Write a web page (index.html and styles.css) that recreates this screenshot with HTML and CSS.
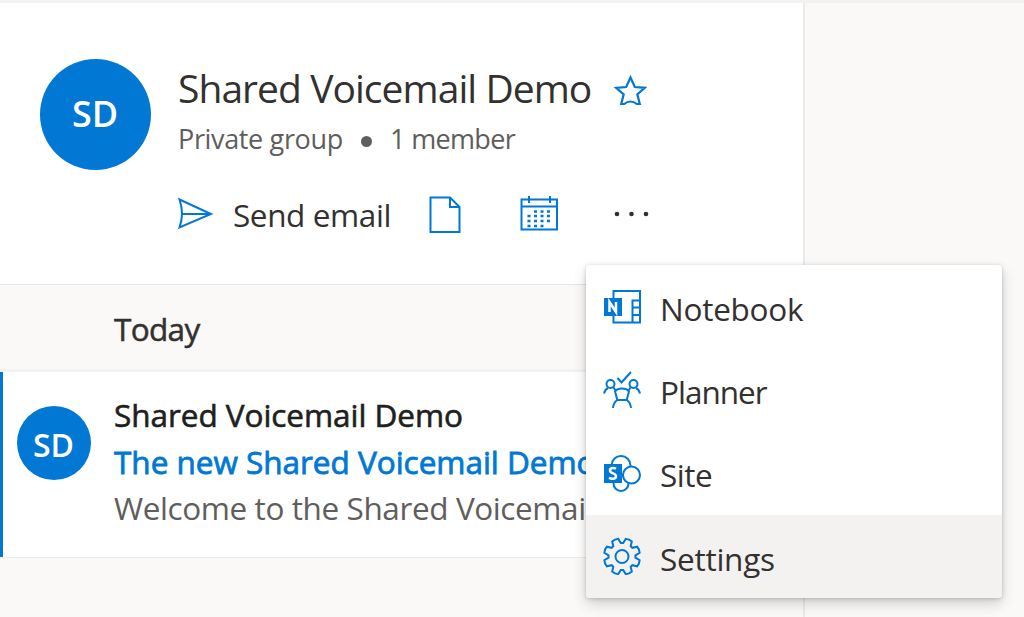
FILE: index.html
```html
<!DOCTYPE html>
<html lang="en">
<head>
<meta charset="utf-8">
<title>Shared Voicemail Demo</title>
<link rel="stylesheet" href="styles.css">
</head>
<body>
<div class="app">
  <main class="panel">
    <header class="group">
      <div class="avatar avatar-large"><span>SD</span></div>
      <div class="group-info">
        <div class="title-row">
          <h1 class="title">Shared Voicemail Demo</h1>
          <svg class="star" width="34" height="34" viewBox="0 0 34 34"><path d="M17.500 3.500l4.300 9.500 10 .8-7.500 6.500 2.500 9.700h-3q-3-2.500-6.300-2.500T11.200 30h-3l2.500-9.700L3.200 13.800l10-.8z"/></svg>
        </div>
        <div class="meta"><span class="privacy">Private group</span><span class="dot"></span><span class="members">1 member</span></div>
        <div class="toolbar">
          <svg class="send" width="38" height="34" viewBox="0 0 38 34"><path d="M2.500 2.500L34 17 2.500 30.500Q7.500 17 2.500 2.500zM5 17h29"/></svg>
          <span class="send-label">Send email</span>
          <svg class="file" width="32" height="38" viewBox="0 0 32 38"><path d="M1.500 1.500H21L30.500 11v25H1.500zM21 1.500V11h9.500"/></svg>
          <svg class="calendar" width="38" height="36" viewBox="0 0 38 36"><path d="M1.500 3.500h35.500v30H1.500zM1.500 10.500H37M9 0v7M30 0v7"/><path class="days" d="M14 15.500h18M7.500 20h25M7.500 25h25M7.500 30h18"/></svg>
          <svg class="more" width="36" height="6" viewBox="0 0 36 6"><circle cx="3" cy="3" r="2.300"/><circle cx="17.500" cy="3" r="2.300"/><circle cx="32" cy="3" r="2.300"/></svg>
        </div>
      </div>
    </header>
    <div class="day"><span>Today</span></div>
    <article class="message">
      <div class="avatar avatar-small"><span>SD</span></div>
      <div class="lines">
        <div class="sender">Shared Voicemail Demo</div>
        <div class="subject">The new Shared Voicemail Demo</div>
        <div class="preview">Welcome to the Shared Voicemail</div>
      </div>
    </article>
  </main>
  <nav class="menu">
    <div class="item">
      <svg width="38" height="38" viewBox="0 0 38 38"><path d="M10.500 10V3H37v31.500H10.500V28M29.500 34V12.500H37M29.500 19.500H37M29.500 27H37"/><path class="solid" d="M1 10h18v18H1z"/><path class="mark" d="M6.500 24V14l6.500 10V14"/></svg>
      <span class="w-notebook">Notebook</span>
    </div>
    <div class="item">
      <svg width="38" height="38" viewBox="0 0 38 38"><path d="M14.500 7l4 4.500L28 1M1 22.500c.8-2.800 2-4.500 4-5.500M10.500 16.500l2 3M37 22.500c-.8-2.800-2-4.500-4-5.500M27.500 16.500l-2 3M19 17.500c3 0 5.500 1 7 2.800l-2.300 8.700h-9.400L12 20.300c1.500-1.800 4-2.800 7-2.800zM14.300 29Q10.500 31.500 10 37M23.700 29q3.800 2.500 4.300 8"/><circle cx="7.500" cy="13" r="4"/><circle cx="30.500" cy="13" r="4"/></svg>
      <span class="w-planner">Planner</span>
    </div>
    <div class="item">
      <svg width="38" height="38" viewBox="0 0 38 38"><circle cx="18" cy="11.500" r="9.500"/><circle class="paper" cx="18" cy="29.500" r="7.500"/><circle class="paper" cx="28.500" cy="21" r="8.500"/><path class="solid" d="M1 10h18v19H1z"/><path class="mark" d="M13 14.700c-2-1.200-6-1-6 1.800 0 3.500 6 2.300 6 5.700 0 3-4.500 3-7 1.500"/></svg>
      <span class="w-site">Site</span>
    </div>
    <div class="item selected">
      <svg width="38" height="38" viewBox="0 0 38 38"><path id="gear" d=""/><circle cx="19" cy="19.500" r="6.500"/></svg>
      <span class="w-settings">Settings</span>
    </div>
  </nav>
</div>
<script src="gear.js"></script>
</body>
</html>
```
FILE: gear.js
```js
// Builds the outline of the eight-toothed gear around (19, 19.5).
const steps = [];
for (let i = 0; i < 8; i++) {
  const base = i * 45;
  const point = (radius, degrees) => {
    const a = (base + degrees) * Math.PI / 180;
    return (19 + radius * Math.sin(a)).toFixed(2) + ' ' + (19.5 - radius * Math.cos(a)).toFixed(2);
  };
  steps.push((i ? 'L' : 'M') + point(13.5, -5), 'L' + point(13.5, 5), 'L' + point(18, 12), 'L' + point(18.300, 22.500), 'L' + point(18, 33));
}
document.getElementById('gear').setAttribute('d', steps.join('') + 'Z');
```
FILE: styles.css
```css
* { box-sizing: border-box; }
body { margin: 0; overflow: hidden; font-family: "Open Sans", "Noto Sans", sans-serif; background: #faf9f8; color: #323130; }
.app { position: relative; width: 1024px; height: 617px; border-top: 3px solid #f3f2f1; background: #faf9f8; overflow: hidden; }
.panel { width: 805px; height: 614px; border-right: 2px solid #eaeaea; }
svg { flex: none; display: block; fill: none; stroke: #0078d4; stroke-width: 2; }
span, h1, .lines div { white-space: nowrap; }
.group { display: flex; gap: 27px; height: 282px; padding: 56px 0 0 40px; background: #fff; border-bottom: 1px solid #e5e5e5; }
.avatar { display: flex; flex: none; align-items: center; justify-content: center; border-radius: 50%; background: #0078d4; color: #fff; font-weight: 600; }
.avatar-large { width: 111px; height: 111px; font-size: 36px; line-height: 40px; }
.avatar-large span { padding: 0 1px 2px 0; }
.avatar-small { width: 74px; height: 74px; margin-top: 34px; font-size: 32px; line-height: 40px; }
.avatar-small span { padding: 3px 1px 0 0; }
.group-info { padding-top: 2px; }
.title-row { display: flex; align-items: center; gap: 22px; }
.title { width: 413px; margin: 0; font-size: 39px; font-weight: 400; line-height: 54px; letter-spacing: -0.950px; }
.star { margin-top: 5px; stroke-width: 2.200; }
.meta { display: flex; align-items: center; height: 36px; margin-top: 6px; font-size: 27px; line-height: 36px; color: #605e5c; }
.privacy { width: 165px; letter-spacing: -0.350px; }
.dot { width: 11px; height: 11px; margin: 5px 18px 0 18px; border-radius: 50%; background: #605e5c; }
.members { letter-spacing: -0.650px; }
.toolbar { display: flex; align-items: center; height: 40px; margin-top: 38px; font-size: 31.500px; line-height: 40px; }
.send { margin: -3px 18px 0 -1px; }
.send-label { width: 157px; letter-spacing: -0.400px; }
.file { margin-left: 39px; }
.calendar { margin: -2px 0 0 59px; }
.days { stroke-width: 2.500; stroke-dasharray: 3 3.500; }
.more { margin: -2px 0 0 56px; fill: #323130; stroke: none; }
.day { height: 87px; padding: 24px 0 0 114px; font-size: 31.500px; line-height: 40px; letter-spacing: -0.650px; -webkit-text-stroke: 0.500px currentColor; border-bottom: 3px solid #f3f2f1; }
.message { display: flex; height: 186px; padding-left: 17px; gap: 23px; background: #fff; box-shadow: inset 3px 0 #0078d4; border-bottom: 1px solid #edebe9; }
.lines { padding-top: 20px; font-size: 31.500px; line-height: 46.500px; }
.sender { color: #201f1e; letter-spacing: -0.050px; -webkit-text-stroke: 0.600px currentColor; }
.subject { color: #0078d4; letter-spacing: -0.020px; -webkit-text-stroke: 0.800px currentColor; }
.preview { color: #605e5c; letter-spacing: -0.400px; }
.menu { position: absolute; left: 586px; top: 262px; width: 416px; height: 333px; background: #fff; border-radius: 4px; box-shadow: 0 6px 14px rgba(0,0,0,.16), 0 1px 4px rgba(0,0,0,.18); overflow: hidden; }
.item { display: flex; align-items: center; gap: 19px; height: 83.250px; padding-left: 17px; font-size: 31.500px; line-height: 40px; }
.item span { padding-top: 5px; }
.w-notebook { letter-spacing: -0.250px; }
.w-planner { letter-spacing: -1px; }
.item .w-site { padding-top: 3px; letter-spacing: -0.500px; }
.w-settings { letter-spacing: -0.250px; }
.selected { background: #f3f2f1; }
.solid { fill: #0078d4; stroke: none; }
.mark { stroke: #fff; stroke-width: 2.500; }
.paper { fill: #fff; }
```
